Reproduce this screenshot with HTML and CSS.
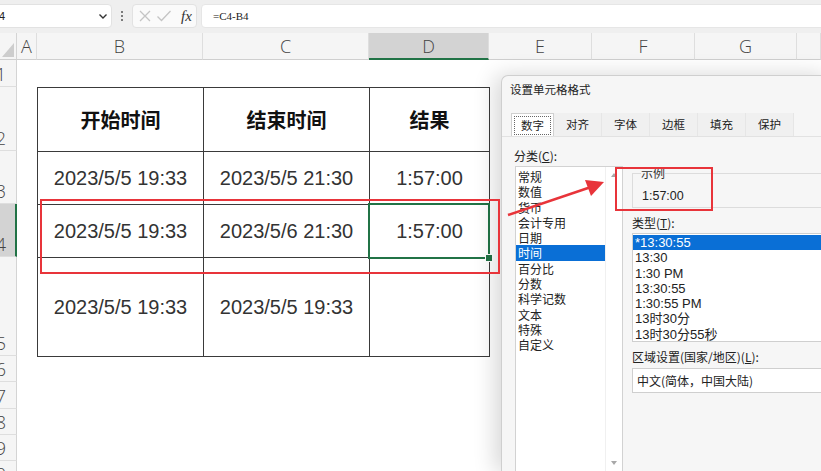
FILE: index.html
```html
<!DOCTYPE html>
<html><head><meta charset="utf-8">
<link rel="stylesheet" href="styles.css"></head><body>

<div class="topbar">
  <div class="namebox"><span>D4</span>
    <svg width="10" height="8" viewBox="0 0 10 8"><path d="M1.5 2.5 L5 6 L8.5 2.5" fill="none" stroke="#333" stroke-width="1.4"/></svg>
  </div>
  <div class="dots"><i></i><i></i><i></i></div>
  <div class="fxbox">
    <svg width="14" height="14" viewBox="0 0 14 14"><path d="M2 2 L12 12 M12 2 L2 12" stroke="#c4c4c4" stroke-width="1.3"/></svg>
    <svg width="16" height="14" viewBox="0 0 16 14"><path d="M1.5 7.5 L5.5 11.5 L14.5 2" fill="none" stroke="#c4c4c4" stroke-width="1.3"/></svg>
    <span class="fx">fx</span>
  </div>
  <div class="formula">=C4-B4</div>
</div>

<div class="sheet">
  <div class="corner"><svg width="12" height="14" viewBox="0 0 12 14"><path d="M12 0 L12 14 L0 14 Z" fill="#cdcdcd"/></svg></div>
  <div class="colhd">A</div>
  <div class="colhd">B</div>
  <div class="colhd">C</div>
  <div class="colhd sel">D</div>
  <div class="colhd">E</div>
  <div class="colhd">F</div>
  <div class="colhd">G</div>
  <div class="colhd"></div>

  <div class="rowhd r1"><span>1</span></div>
  <div class="rowhd r2"><span>2</span></div>
  <div class="rowhd r3"><span>3</span></div>
  <div class="rowhd r4 sel"><span>4</span></div>
  <div class="rowhd r5"><span>5</span></div>
  <div class="rowhd r6"><span>6</span></div>
  <div class="rowhd r7"><span>7</span></div>
  <div class="rowhd r8"><span>8</span></div>
  <div class="rowhd r9"><span>9</span></div>
  <div class="rowhd r10"><span>10</span></div>

  <table class="data">
    <colgroup><col class="wide"><col class="wide"><col class="narrow"></colgroup>
    <tr class="h"><th>开始时间</th><th>结束时间</th><th>结果</th></tr>
    <tr class="m"><td>2023/5/5 19:33</td><td>2023/5/5 21:30</td><td>1:57:00</td></tr>
    <tr class="m"><td>2023/5/5 19:33</td><td>2023/5/6 21:30</td><td>1:57:00</td></tr>
    <tr class="t"><td>2023/5/5 19:33</td><td>2023/5/5 19:33</td><td></td></tr>
  </table>
</div>

<div class="selbox"><i class="handle"></i></div>

<div class="dialog">
  <div class="dlg-title">设置单元格格式</div>
  <div class="tabs">
    <span class="tab on"><b>数字</b></span>
    <span class="tab">对齐</span>
    <span class="tab">字体</span>
    <span class="tab">边框</span>
    <span class="tab">填充</span>
    <span class="tab">保护</span>
  </div>
  <div class="lbl cat-lbl">分类(<u>C</u>):</div>
  <div class="pane">
    <div class="catlist">
      <ul>
        <li>常规</li>
        <li>数值</li>
        <li>货币</li>
        <li>会计专用</li>
        <li>日期</li>
        <li class="on">时间</li>
        <li>百分比</li>
        <li>分数</li>
        <li>科学记数</li>
        <li>文本</li>
        <li>特殊</li>
        <li>自定义</li>
      </ul>
      <div class="scroll">
        <svg width="8" height="6" viewBox="0 0 8 6"><path d="M4 1 L7 5 L1 5 Z" fill="#a8a8a8"/></svg>
        <svg width="8" height="6" viewBox="0 0 8 6"><path d="M1 1 L7 1 L4 5 Z" fill="#a8a8a8"/></svg>
      </div>
    </div>
    <div class="right">
      <fieldset class="sample">
        <legend>示例</legend>
        <div class="sample-val">1:57:00</div>
      </fieldset>
      <div class="lbl">类型(<u>T</u>):</div>
      <ul class="typelist">
        <li class="on">*13:30:55</li>
        <li>13:30</li>
        <li>1:30 PM</li>
        <li>13:30:55</li>
        <li>1:30:55 PM</li>
        <li>13时30分</li>
        <li>13时30分55秒</li>
      </ul>
      <div class="lbl">区域设置(国家/地区)(<u>L</u>):</div>
      <div class="select">中文(简体，中国大陆)</div>
    </div>
  </div>
</div>

<div class="mark mark-row"></div>
<div class="mark mark-sample"></div>
<svg class="arrow" width="110" height="50" viewBox="0 0 110 50">
  <path d="M5 43 L88 15" stroke="#e8343a" stroke-width="2.6" fill="none"/>
  <path d="M101 10 L82 8 L88 24 Z" fill="#e8343a"/>
</svg>

</body></html>
```

FILE: styles.css
```css
body {
  margin: 0;
  width: 821px;
  height: 471px;
  overflow: hidden;
  background: #fff;
  font-family: "Noto Sans CJK SC", sans-serif;
  position: relative;
}

/* formula bar */
.topbar {
  height: 33px;
  box-sizing: border-box;
  padding-top: 4px;
  background: #efefef;
  display: flex;
  align-items: flex-start;
}
.namebox {
  margin-left: -30px;
  width: 142px;
  height: 24px;
  box-sizing: border-box;
  background: #fff;
  border: 1px solid #e2e2e2;
  border-radius: 4px;
  padding: 0 3px 0 20px;
  display: flex;
  align-items: center;
  justify-content: space-between;
  font: 11px "Liberation Sans", sans-serif;
  color: #222;
}
.dots {
  width: 20px;
  height: 24px;
  display: flex;
  flex-direction: column;
  align-items: center;
  justify-content: center;
  gap: 2px;
}
.dots i {width: 2px; height: 2px; background: #555; border-radius: 1px;}
.fxbox {
  width: 65px;
  height: 24px;
  box-sizing: border-box;
  background: #fafafa;
  border: 1px solid #e2e2e2;
  border-radius: 4px;
  display: flex;
  align-items: center;
  padding-left: 5px;
  gap: 4px;
}
.fx {
  font: italic 15px "Liberation Serif", serif;
  color: #333;
  margin-left: 5px;
}
.formula {
  flex: 1;
  margin: 0 -10px 0 4px;
  height: 24px;
  box-sizing: border-box;
  background: #fff;
  border: 1px solid #e6e6e6;
  border-radius: 4px;
  padding-left: 11px;
  font: 11px/22px "Liberation Serif", serif;
  color: #222;
}

/* sheet grid */
.sheet {
  display: grid;
  grid-template-columns: 17px 20px 166px 166px 120px 103px 103px 102px 1fr;
  grid-template-rows: 27px 27px 64px 53px 53px 99px 26px 27px 26px 26px 26px;
}
.corner {
  background: #f5f5f5;
  border-right: 1px solid #d4d4d4;
  border-bottom: 1px solid #cfcfcf;
  display: flex;
  align-items: flex-end;
  justify-content: flex-end;
  padding: 0 2px 2px 0;
  box-sizing: border-box;
}
.colhd {
  background: #f5f5f5;
  border-right: 1px solid #dedede;
  border-bottom: 1px solid #cfcfcf;
  box-sizing: border-box;
  display: flex;
  align-items: center;
  justify-content: center;
  font: 300 18px "Open Sans", sans-serif;
  color: #444;
}
.colhd.sel {
  background: #d3d3d3;
  border-bottom: 2px solid #217346;
}
.rowhd {
  grid-column: 1;
  background: #f5f5f5;
  border-right: 1px solid #d4d4d4;
  border-bottom: 1px solid #dedede;
  box-sizing: border-box;
  overflow: hidden;
  display: flex;
  align-items: flex-end;
  justify-content: flex-end;
  padding: 0 10px 1px 0;
  font: 300 18px/22px "Open Sans", sans-serif;
  color: #444;
}
.rowhd.sel {
  background: #d3d3d3;
  border-right: 2px solid #217346;
  padding-right: 9px;
}
.r1 {grid-row: 2;}
.r2 {grid-row: 3;}
.r3 {grid-row: 4;}
.r4 {grid-row: 5;}
.r5 {grid-row: 6;}
.r6 {grid-row: 7;}
.r7 {grid-row: 8;}
.r8 {grid-row: 9;}
.r9 {grid-row: 10;}
.r10 {grid-row: 11;}

.data {
  grid-column: 3 / 6;
  grid-row: 3 / 7;
  width: 452px;
  height: 100%;
  border-collapse: collapse;
  table-layout: fixed;
}
.data col.wide {width: 166px;}
.data col.narrow {width: 120px;}
.data th, .data td {
  border: 1.5px solid #3a3a3a;
  text-align: center;
  vertical-align: middle;
  padding: 0;
}
.data th {
  font: bold 20px "Noto Sans CJK SC", sans-serif;
  color: #111;
}
.data td {
  font: 20px "Liberation Sans", sans-serif;
  color: #333;
}
.data tr.h {height: 64px;}
.data tr.m {height: 53px;}
.data tr.t {height: 99px;}

.selbox {
  position: absolute;
  left: 368px;
  top: 203px;
  width: 118px;
  height: 52px;
  border: 2px solid #217346;
}
.handle {
  position: absolute;
  right: -5px;
  bottom: -5px;
  width: 6px;
  height: 6px;
  background: #217346;
  border: 1px solid #fff;
}

/* format cells dialog */
.dialog {
  position: absolute;
  left: 501px;
  top: 75px;
  width: 330px;
  height: 396px;
  overflow: hidden;
  background: #f6f6f6;
  border: 1px solid #cfcfcf;
  border-right: none;
  border-bottom: none;
  border-radius: 7px 0 0 0;
  box-shadow: -6px 0 22px rgba(0,0,0,0.16);
  font-size: 12px;
  color: #222;
}
.dlg-title {
  height: 26px;
  line-height: 26px;
  padding-left: 8px;
  font-size: 11.5px;
}
.tabs {
  margin-top: 11px;
  padding-left: 9px;
  height: 23px;
  display: flex;
  border-bottom: 1px solid #e2e2e2;
}
.tab {
  width: 48px;
  box-sizing: border-box;
  text-align: center;
  line-height: 22px;
  font-size: 11.5px;
  border-right: 1px solid #e6e6e6;
  background: #f0f0f0;
}
.tab.on {
  width: 43px;
  background: #fff;
  border: 1px solid #d0d0d0;
  border-bottom: none;
  padding: 2px;
}
.tab.on b {
  display: block;
  font-weight: normal;
  line-height: 17px;
  border: 1px dotted #666;
}
.lbl {
  font-size: 12px;
  line-height: 15px;
}
.cat-lbl {
  margin: 11px 0 0 12px;
}
.pane {
  display: flex;
  margin: 3px 0 0 13px;
  gap: 9px;
}
.catlist {
  width: 108px;
  height: 307px;
  box-sizing: border-box;
  background: #fff;
  border: 1px solid #d2d2d2;
  display: flex;
}
.catlist ul, .typelist {
  list-style: none;
  margin: 0;
  padding: 2px 0 0;
}
.catlist ul {flex: 1;}
.catlist li, .typelist li {
  line-height: 15.3px;
  height: 15.3px;
  padding-left: 2px;
  font-size: 12px;
}
.catlist li.on, .typelist li.on {
  background: #0a6fd6;
  color: #fff;
}
.scroll {
  width: 16px;
  display: flex;
  flex-direction: column;
  justify-content: space-between;
  align-items: center;
  padding: 5px 0 6px;
  border-left: 1px solid #f0f0f0;
}
.right {
  flex: 1;
}
.sample {
  margin: 0;
  padding: 0 9px;
  height: 42px;
  box-sizing: border-box;
  border: 1px solid #dcdcdc;
  border-right: none;
}
.sample legend {
  padding: 0;
  margin-left: -1px;
  font-size: 12px;
  line-height: 14px;
  color: #333;
}
.sample-val {
  margin-top: 9px;
  font: 12.5px "Liberation Sans", sans-serif;
}
.right > .lbl {
  margin-top: 7px;
}
.typelist {
  margin-top: 3px;
  height: 109px;
  box-sizing: border-box;
  background: #fff;
  border: 1px solid #cfcfcf;
  padding-top: 1px;
}
.typelist li {
  font-family: "Liberation Sans", "Noto Sans CJK SC", sans-serif;
  font-size: 13px;
}
.select {
  margin-top: 4px;
  height: 25px;
  box-sizing: border-box;
  background: #fff;
  border: 1px solid #cfcfcf;
  padding-left: 4px;
  line-height: 23px;
  font-size: 12px;
}

/* red annotations */
.mark {
  position: absolute;
  border: 2px solid #e8343a;
}
.mark-row {
  left: 40px;
  top: 199px;
  width: 456px;
  height: 71px;
}
.mark-sample {
  left: 615px;
  top: 167px;
  width: 94px;
  height: 40px;
}
.arrow {
  position: absolute;
  left: 503px;
  top: 172px;
}
```
